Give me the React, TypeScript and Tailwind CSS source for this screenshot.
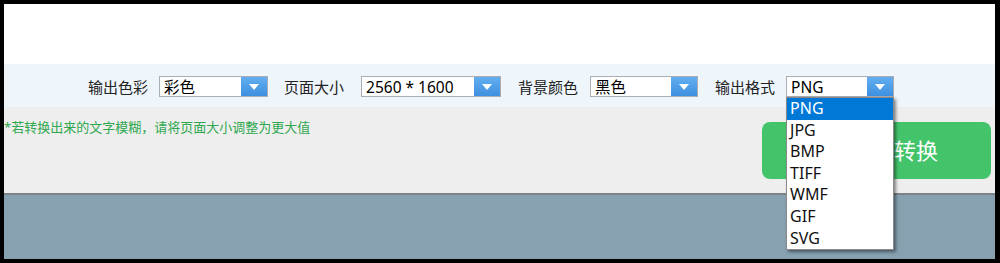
import React from 'react';

const font = { fontFamily: '"Noto Sans", "Noto Sans CJK SC", sans-serif' };

function Select({ value, width, open }: { value: string; width: string; open?: boolean }) {
  const options = ['PNG', 'JPG', 'BMP', 'TIFF', 'WMF', 'GIF', 'SVG'];
  return (
    <div className={`relative h-[21px] ${width}`}>
      <div className="flex h-full border border-[#abadb3] bg-white">
        <span className="flex-1 pl-[4px] pt-[1px] text-[15.5px] leading-[19px] text-black">{value}</span>
        <div className="flex w-[26px] items-center justify-center bg-gradient-to-b from-[#62aef0] to-[#3d8fe0]">
          <svg width="10" height="6" viewBox="0 0 10 6">
            <path d="M0 0h10L5 6z" fill="#fff" />
          </svg>
        </div>
      </div>
      {open && (
        <div className="absolute left-0 top-full z-10 w-full border border-[#8a8a8a] bg-white shadow-[2px_2px_3px_rgba(0,0,0,0.45)]">
          {options.map((o, i) => (
            <div
              key={o}
              className={`h-[21.6px] pl-[3px] text-[16px] leading-[21.6px] ${
                i === 0 ? 'bg-[#0078d7] text-white' : 'text-[#111]'
              }`}
            >
              {o}
            </div>
          ))}
        </div>
      )}
    </div>
  );
}

export default function App() {
  return (
    <div className="h-[263px] w-[1000px] bg-black pb-[4px] pl-[4px] pr-[5px] pt-[4px]" style={font}>
      <div className="flex h-full flex-col">
        <div className="h-[60px] bg-white" />

        {/* toolbar */}
        <div className="flex h-[43px] items-start bg-[#eef5fb] pl-[84px] pt-[12px] text-[15px] leading-[21px] text-[#222]">
          <span className="pt-[1px]">输出色彩</span>
          <div className="ml-[11px]">
            <Select value="彩色" width="w-[109px]" />
          </div>
          <span className="ml-[16px] pt-[1px]">页面大小</span>
          <div className="ml-[17px]">
            <Select value="2560 * 1600" width="w-[140px]" />
          </div>
          <span className="ml-[17px] pt-[1px]">背景颜色</span>
          <div className="ml-[12px]">
            <Select value="黑色" width="w-[108px]" />
          </div>
          <span className="ml-[17px] pt-[1px]">输出格式</span>
          <div className="ml-[11px]">
            <Select value="PNG" width="w-[108px]" open />
          </div>
        </div>

        {/* content */}
        <div className="flex h-[88px] items-start justify-between border-b-2 border-[#7d8488] bg-[#eeeeee]">
          <p className="mt-[11px] text-[13px] leading-[18px] text-[#2fa84f]">*若转换出来的文字模糊，请将页面大小调整为更大值</p>
          <button className="mr-[4px] mt-[15px] flex h-[57px] w-[229px] items-center rounded-[8px] bg-[#43c46b] pl-[88px] text-[22px] text-white">
            开始转换
          </button>
        </div>

        <div className="flex-1 bg-[#87a1b0]" />
      </div>
    </div>
  );
}
